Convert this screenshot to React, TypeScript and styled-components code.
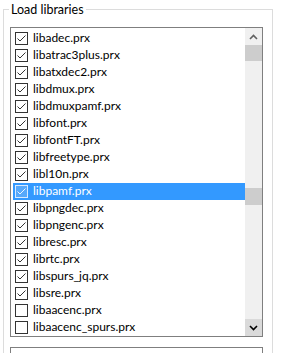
import React from "react";
import styled, { createGlobalStyle } from "styled-components";

const Global = createGlobalStyle`
  html, body { margin: 0; padding: 0; background: #ffffff; }
  body { font-family: "Lato", "Noto Sans", sans-serif; font-size: 12px; color: #000; }
`;

const Page = styled.div`
  width: 281px;
  height: 353px;
  overflow: hidden;
  position: relative;
  padding: 9px 8px 0 3px;
  box-sizing: border-box;
`;

const Group = styled.fieldset`
  margin: 0;
  padding: 17px 9px 0 6px;
  border: 1px solid #dcdcdc;
  border-bottom: none;
  height: 360px;
  box-sizing: border-box;
  position: relative;
`;

const Legend = styled.div`
  position: absolute;
  top: -9px;
  left: 5px;
  background: #fff;
  padding: 0 2px;
  line-height: 18px;
  font-size: 12.5px;
`;

const ListBox = styled.div`
  display: flex;
  border: 1px solid #7f7f7f;
  height: 310px;
  box-sizing: border-box;
  background: #fff;
`;

const Items = styled.div`
  flex: 1;
  padding: 2px 0 0 2px;
  overflow: hidden;
  display: flex;
  flex-direction: column;
`;

const Row = styled.div<{ $sel?: boolean }>`
  height: 17px;
  flex: 0 0 17px;
  display: flex;
  align-items: center;
  gap: 5px;
  padding-left: 2px;
  background: ${(p) => (p.$sel ? "#3399ff" : "transparent")};
  color: ${(p) => (p.$sel ? "#fff" : "#000")};
  white-space: nowrap;
`;

const Box = styled.span<{ $sel?: boolean }>`
  width: 13px;
  height: 13px;
  box-sizing: border-box;
  border: 1px solid ${(p) => (p.$sel ? "#d8eaff" : "#333")};
  background: ${(p) => (p.$sel ? "#57a9fb" : "#fff")};
  display: flex;
  align-items: center;
  justify-content: center;
  flex: 0 0 13px;
`;

const Label = styled.span`
  line-height: 17px;
  font-size: 12px;
  position: relative;
  top: -1px;
`;

const ScrollBar = styled.div`
  width: 17px;
  flex: 0 0 17px;
  background: #f0f0f0;
  display: flex;
  flex-direction: column;
`;

const Arrow = styled.div<{ $bg?: string }>`
  height: 17px;
  flex: 0 0 17px;
  display: flex;
  align-items: center;
  justify-content: center;
  background: ${(p) => p.$bg || "#f0f0f0"};
`;

const Block = styled.div<{ $h: number }>`
  height: ${(p) => p.$h}px;
  flex: 0 0 ${(p) => p.$h}px;
  background: #cdcdcd;
`;

const Gap = styled.div<{ $h?: number }>`
  ${(p) => (p.$h ? `height:${p.$h}px; flex: 0 0 ${p.$h}px;` : "flex: 1;")}
`;

const NextBox = styled.div`
  margin-top: 10px;
  border: 1px solid #7f7f7f;
  height: 20px;
`;

const items = [
  ["libadec.prx", true],
  ["libatrac3plus.prx", true],
  ["libatxdec2.prx", true],
  ["libdmux.prx", true],
  ["libdmuxpamf.prx", true],
  ["libfont.prx", true],
  ["libfontFT.prx", true],
  ["libfreetype.prx", true],
  ["libl10n.prx", true],
  ["libpamf.prx", true],
  ["libpngdec.prx", true],
  ["libpngenc.prx", true],
  ["libresc.prx", true],
  ["librtc.prx", true],
  ["libspurs_jq.prx", true],
  ["libsre.prx", true],
  ["libaacenc.prx", false],
  ["libaacenc_spurs.prx", false],
] as const;

const Check = ({ sel }: { sel: boolean }) => (
  <svg width="11" height="11" viewBox="0 0 11 11">
    <path d="M1.5 5.5 L4 8 L9.5 2.5" fill="none" stroke={sel ? "#eaf4ff" : "#333"} strokeWidth="1" />
  </svg>
);

export default function App() {
  return (
    <>
      <Global />
      <Page>
        <Group>
          <Legend>Load libraries</Legend>
          <ListBox>
            <Items>
              {items.map(([name, checked], i) => {
                const sel = i === 9;
                return (
                  <Row key={name} $sel={sel}>
                    <Box $sel={sel}>{checked && <Check sel={sel} />}</Box>
                    <Label>{name}</Label>
                  </Row>
                );
              })}
            </Items>
            <ScrollBar>
              <Arrow>
                <svg width="9" height="6" viewBox="0 0 9 6">
                  <path d="M1 5 L4.5 1.5 L8 5" fill="none" stroke="#606060" strokeWidth="1.6" />
                </svg>
              </Arrow>
              <Block $h={16} />
              <Gap $h={127} />
              <Block $h={17} />
              <Gap />
              <Arrow $bg="#dadada">
                <svg width="9" height="6" viewBox="0 0 9 6">
                  <path d="M1 1 L4.5 4.5 L8 1" fill="none" stroke="#000" strokeWidth="1.6" />
                </svg>
              </Arrow>
            </ScrollBar>
          </ListBox>
          <NextBox />
        </Group>
      </Page>
    </>
  );
}
